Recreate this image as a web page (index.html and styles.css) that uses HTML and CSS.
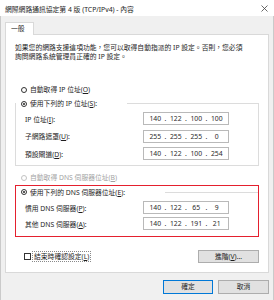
FILE: index.html
```html
<!DOCTYPE html>
<html>
<head>
    <meta charset="utf-8">
    <title>網際網路通訊協定第 4 版 (TCP/IPv4) - 內容</title>
    <link rel="stylesheet" href="styles.css">
</head>
<body>
<div class="window">
    <div class="titlebar">
        <span class="title">網際網路通訊協定第 4 版 (TCP/IPv4) - 內容</span>
        <svg class="close" width="7" height="7" viewBox="0 0 7 7"><path d="M0.5 0.5L6.5 6.5M6.5 0.5L0.5 6.5" stroke="#444" stroke-width="0.8" fill="none"/></svg>
    </div>

    <div class="dialog">
        <div class="tabs"><div class="tab">一般</div></div>

        <div class="panel">
            <p class="intro">如果您的網路支援這項功能，您可以取得自動指派的 IP 設定。否則，您必須<br>詢問網路系統管理員正確的 IP 設定。</p>

            <div class="option option-first"><span class="radio"></span>自動取得 IP 位址(<u>O</u>)</div>

            <fieldset class="group">
                <legend class="legend legend-ip"><span class="radio checked"></span>使用下列的 IP 位址(<u>S</u>):</legend>
                <div class="fields">
                    <div class="field">
                        <span>IP 位址(<u>I</u>):</span>
                        <div class="ip"><span class="oct">140</span><span class="dot">.</span><span class="oct">122</span><span class="dot">.</span><span class="oct">100</span><span class="dot">.</span><span class="oct">100</span></div>
                    </div>
                    <div class="field">
                        <span>子網路遮罩(<u>U</u>):</span>
                        <div class="ip"><span class="oct">255</span><span class="dot">.</span><span class="oct">255</span><span class="dot">.</span><span class="oct">255</span><span class="dot">.</span><span class="oct">0</span></div>
                    </div>
                    <div class="field">
                        <span>預設閘道(<u>D</u>):</span>
                        <div class="ip"><span class="oct">140</span><span class="dot">.</span><span class="oct">122</span><span class="dot">.</span><span class="oct">100</span><span class="dot">.</span><span class="oct">254</span></div>
                    </div>
                </div>
            </fieldset>

            <div class="option option-dns disabled"><span class="radio"></span>自動取得 DNS 伺服器位址(<u>B</u>)</div>

            <div class="highlight">
                <fieldset class="group group-dns">
                    <legend class="legend legend-dns"><span class="radio checked"></span>使用下列的 DNS 伺服器位址(<u>E</u>):</legend>
                    <div class="fields fields-dns">
                        <div class="field">
                            <span>慣用 DNS 伺服器(<u>P</u>):</span>
                            <div class="ip"><span class="oct">140</span><span class="dot">.</span><span class="oct">122</span><span class="dot">.</span><span class="oct">65</span><span class="dot">.</span><span class="oct">9</span></div>
                        </div>
                        <div class="field">
                            <span>其他 DNS 伺服器(<u>A</u>):</span>
                            <div class="ip"><span class="oct">140</span><span class="dot">.</span><span class="oct">122</span><span class="dot">.</span><span class="oct">191</span><span class="dot">.</span><span class="oct">21</span></div>
                        </div>
                    </div>
                </fieldset>
            </div>

            <div class="bottom-row">
                <label class="check"><span class="checkbox"></span><span class="focus">結束時確認設定(<u>L</u>)</span></label>
                <button class="btn btn-advanced">進階(<u>V</u>)...</button>
            </div>
        </div>

        <div class="footer">
            <button class="btn btn-ok">確定</button>
            <button class="btn btn-cancel">取消</button>
        </div>
    </div>
</div>
</body>
</html>
```

FILE: styles.css
```css
body{
    margin: 0;
    font-family: "Noto Sans", "Noto Sans CJK TC", sans-serif;
    font-size: 6.8px;
    color: #1e1e1e;}

.window{
    width: 274px;
    height: 300px;
    background-color: #f0f0f0;
    overflow: hidden;}

/* 제목 표시줄 */
.titlebar{
    height: 16px;
    background-color: #fff;
    display: flex;
    align-items: center;
    justify-content: space-between;
    padding: 1px 6px 0 5px;
    box-sizing: border-box;}

.dialog{
    height: 284px;
    box-sizing: border-box;
    border-left: 1px solid #cacaca;
    border-right: 1px solid #cacaca;
    padding: 6px 4px 0;}

.tabs{ display: flex;}

.tab{
    width: 29px;
    height: 13px;
    box-sizing: border-box;
    border: 1px solid #d9d9d9;
    border-bottom: 0;
    background-color: #fff;
    padding-left: 5px;
    line-height: 12px;
    margin-bottom: -1px;
    position: relative;
    z-index: 1;}

.panel{
    height: 239px;
    box-sizing: border-box;
    background-color: #fff;
    border: 1px solid #d9d9d9;
    padding: 8px 9px 0;}

.intro{
    margin: 0;
    line-height: 9px;
    white-space: nowrap;}

.option, .legend{
    display: flex;
    align-items: center;
    height: 9px;
    line-height: 9px;
    white-space: nowrap;}

.option{ padding-left: 6px;}
.option-first{ margin-top: 24px;}
.option-dns{ margin-top: 7px;}

.disabled{ color: #a3a3a3;}
.disabled .radio{ border-color: #c2c2c2;}

.radio{
    width: 6px;
    height: 6px;
    box-sizing: border-box;
    border: 1px solid #333;
    border-radius: 50%;
    margin-right: 3px;
    display: flex;
    align-items: center;
    justify-content: center;}

.radio.checked::after{
    content: "";
    width: 2px;
    height: 2px;
    border-radius: 50%;
    background-color: #222;}

.group{
    margin: 5px 0 0;
    padding: 0 0 5px;
    border: 1px solid #dcdcdc;
    min-width: 0;}

.legend{
    padding: 0 0 0 5px;
    box-sizing: border-box;
    background-color: #fff;}

.legend-ip{ width: 111px;}
.legend-dns{ width: 149px;}

.fields{
    display: flex;
    flex-direction: column;
    gap: 4.5px;
    padding-top: 4px;}

.field{
    display: flex;
    align-items: center;
    justify-content: space-between;
    height: 13px;
    padding: 0 29px 0 9px;
    white-space: nowrap;}

.ip{
    width: 86px;
    height: 13px;
    box-sizing: border-box;
    border: 1px solid #b9b9b9;
    display: flex;
    align-items: center;
    padding: 0 3px;
    color: #2a2a2a;}

.oct{
    flex: 1;
    text-align: center;}

.dot{
    width: 4px;
    text-align: center;}

/* 빨간 강조 박스 */
.highlight{
    margin-top: 3px;
    border: 1px solid #e4202e;
    padding-bottom: 6px;}

.group-dns{
    margin-top: 1.5px;
    padding: 0;
    border-left: 0;
    border-right: 0;
    border-bottom: 0;}

.fields-dns{
    gap: 3px;
    padding-top: 4.5px;}

.bottom-row{
    margin-top: 13px;
    height: 13px;
    display: flex;
    align-items: center;
    justify-content: space-between;}

.check{
    display: flex;
    align-items: center;
    padding-left: 9px;
    white-space: nowrap;}

.checkbox{
    width: 7px;
    height: 7px;
    box-sizing: border-box;
    border: 1px solid #333;
    margin-right: 2px;}

.focus{
    outline: 1px dotted #8a8a8a;
    line-height: 9px;
    padding: 0 1px;}

.btn{
    font-family: inherit;
    font-size: 6.8px;
    color: #1e1e1e;
    padding: 0;
    background-color: #e1e1e1;
    border: 1px solid #adadad;
    line-height: 10px;}

.btn-advanced{
    width: 61px;
    height: 13px;}

.footer{
    display: flex;
    justify-content: flex-end;
    gap: 5px;
    padding-top: 7px;}

.btn-ok{
    width: 50px;
    height: 14px;
    border-color: #0078d7;}

.btn-cancel{
    width: 51px;
    height: 14px;}
```
